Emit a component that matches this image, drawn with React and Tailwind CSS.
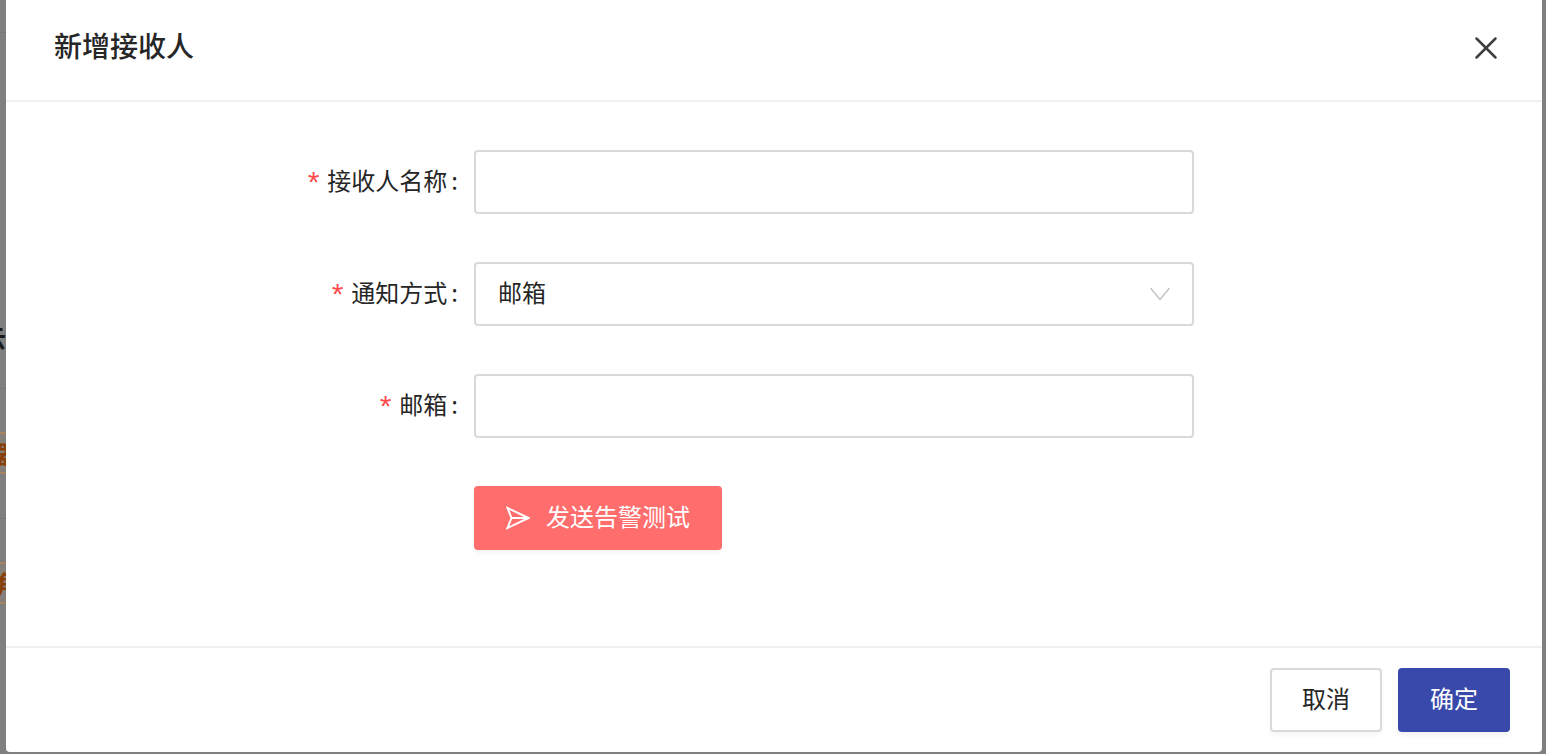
import { X } from "lucide-react";

const font = { fontFamily: '"Noto Sans CJK SC", "Noto Sans", sans-serif' };

function Backdrop() {
  return (
    <div className="absolute inset-0 overflow-hidden bg-[#7f7f7f]">
      <div className="absolute left-0 top-[32px] h-px w-full bg-[#777777]" />
      <div className="absolute left-0 top-[388px] h-px w-full bg-[#777777]" />
      <div className="absolute left-0 top-[518px] h-px w-full bg-[#777777]" />
      <span className="absolute left-[-18px] top-[322px] text-[24px] font-semibold leading-[30px] text-[#1a1a1a]">云</span>
      <div className="absolute left-[-20px] top-[432px] flex h-[42px] w-[40px] items-center justify-end border-y-2 border-[#a5835f] bg-[#85807a] text-[24px] font-semibold text-[#8a3f06]">器</div>
      <div className="absolute left-[-20px] top-[562px] flex h-[42px] w-[40px] items-center justify-end border-y-2 border-[#a5835f] bg-[#85807a] text-[24px] font-semibold text-[#8a3f06]">角</div>
    </div>
  );
}

function Field({ label, children }) {
  return (
    <div className="flex h-[64px] items-center">
      <label className="flex w-[468px] items-center justify-end pb-[4px] pr-[16px] text-[24px] leading-[32px] text-[#262626]">
        <span className="mr-[8px] mt-[4px] text-[30px] leading-[32px] text-[#ff4d4f]" style={{ fontFamily: '"Liberation Sans", sans-serif' }}>*</span>
        {label}
        <span className="ml-[4px]">:</span>
      </label>
      {children}
    </div>
  );
}

function TextInput() {
  return <input className="h-[64px] w-[720px] rounded-[4px] border-2 border-[#d9d9d9] bg-white px-[22px] text-[24px] outline-none" />;
}

export default function App() {
  return (
    <div className="relative h-[754px] w-full overflow-hidden" style={font}>
      <Backdrop />
      <div className="relative ml-[6px] flex h-[752px] w-[1536px] flex-col rounded-b-[4px] bg-white">
        <div className="flex h-[102px] shrink-0 items-center justify-between border-b-2 border-[#f0f0f0] pl-[48px] pr-[37px]">
          <h2 className="mb-[10px] text-[28px] font-medium leading-[40px] text-[#262626]">新增接收人</h2>
          <X size={38} strokeWidth={1.6} className="mt-[-4px] text-[#404040]" />
        </div>

        <div className="flex flex-1 flex-col gap-[48px] pt-[48px]">
          <Field label="接收人名称">
            <TextInput />
          </Field>
          <Field label="通知方式">
            <div className="flex h-[64px] w-[720px] items-center justify-between rounded-[4px] border-2 border-[#d9d9d9] pl-[22px] pr-[22px] text-[24px] text-[#262626]">
              <span className="pb-[4px]">邮箱</span>
              <svg width="20" height="14" viewBox="0 0 20 14" fill="none" stroke="#c4c4c4" strokeWidth="1.5">
                <path d="M0.5 1 L10 12.5 L19.5 1" />
              </svg>
            </div>
          </Field>
          <Field label="邮箱">
            <TextInput />
          </Field>
          <div className="pl-[468px]">
            <button className="flex h-[64px] w-[248px] items-center justify-center gap-[16px] rounded-[4px] bg-[#ff6d6d] text-[24px] text-white shadow-[0_4px_4px_rgba(0,0,0,0.04)]">
              <svg width="24" height="24" viewBox="0 0 24 24" fill="none" stroke="currentColor" strokeWidth="2" strokeLinejoin="miter">
                <path d="M1.5 2 L22.5 12 L1.5 22 L5.5 12 Z M5.5 12 L22.5 12" />
              </svg>
              <span className="pb-[4px]">发送告警测试</span>
            </button>
          </div>
        </div>

        <div className="flex h-[106px] shrink-0 items-start justify-end gap-[16px] border-t-2 border-[#f0f0f0] pr-[32px] pt-[20px]">
          <button className="h-[64px] w-[112px] rounded-[4px] border-2 border-[#d9d9d9] bg-white pb-[4px] text-[24px] text-[#262626] shadow-[0_4px_4px_rgba(0,0,0,0.03)]">取消</button>
          <button className="h-[64px] w-[112px] rounded-[4px] bg-[#3949ab] pb-[4px] text-[24px] text-white shadow-[0_4px_4px_rgba(0,0,0,0.05)]">确定</button>
        </div>
      </div>
    </div>
  );
}
